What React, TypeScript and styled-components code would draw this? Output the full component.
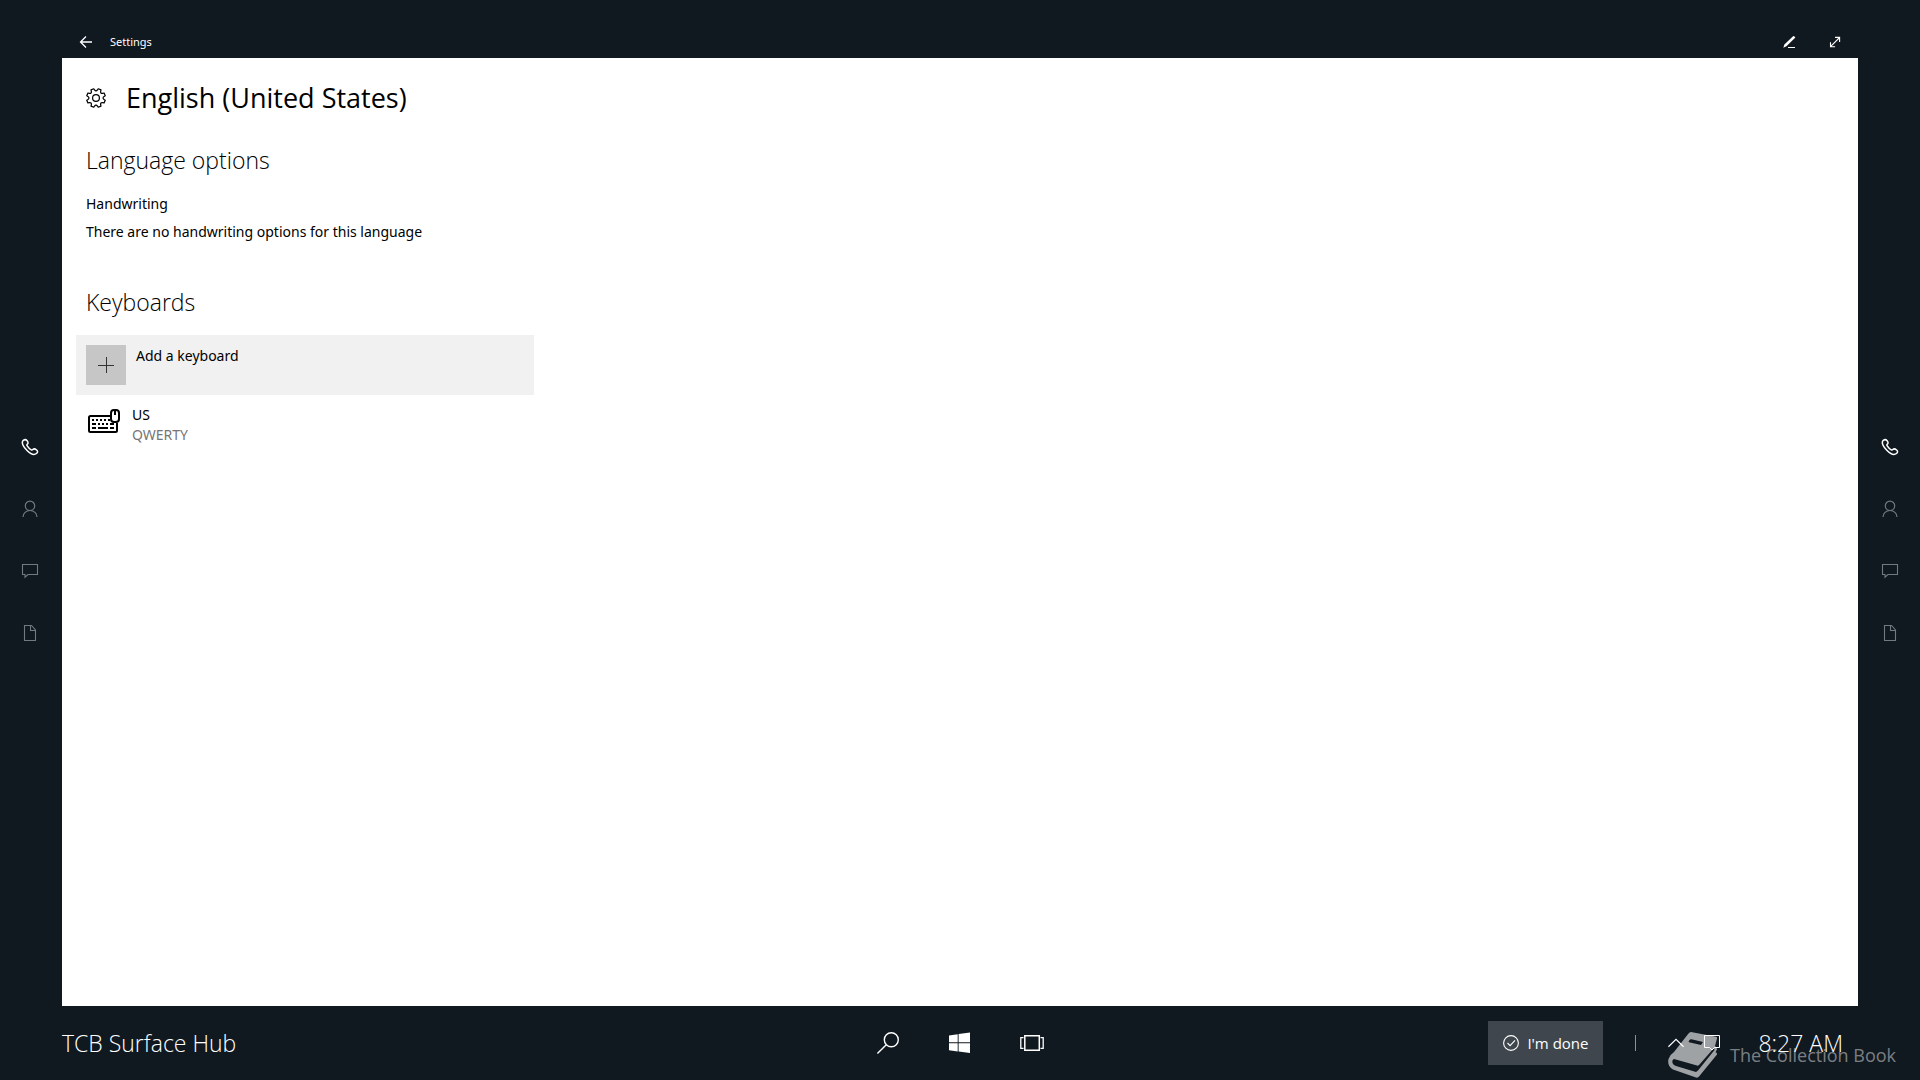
import React from "react";
import styled, { createGlobalStyle } from "styled-components";

const GlobalStyle = createGlobalStyle`
  *, *::before, *::after { box-sizing: border-box; }
  body {
    margin: 0;
    background: #101820;
    font-family: "Segoe UI", "Open Sans", "Noto Sans", sans-serif;
    color: #000;
  }
  button { font: inherit; color: inherit; border: 0; padding: 0; background: none; }
  h1, h2, h3, p, ul { margin: 0; padding: 0; }
  ul { list-style: none; }
  svg { display: block; flex: none; }
`;

const bodyFont = `"Segoe UI", "Noto Sans", "Open Sans", sans-serif`;

const Shell = styled.div`
  position: relative;
  min-height: 100vh;
  display: grid;
  grid-template-columns: 62px minmax(0, 1fr) 62px;
  grid-template-rows: 58px 1fr 74px;
  background: #101820;
  color: #fff;
`;

const TitleBar = styled.header`
  grid-column: 2;
  display: flex;
  align-items: center;
  justify-content: space-between;
  padding: 26px 15px 0 16px;
`;

const TitleGroup = styled.div`
  display: flex;
  align-items: center;
  gap: 16px;
  font-family: ${bodyFont};
  font-size: 11px;
  line-height: 16px;
`;

const WindowActions = styled.div`
  display: flex;
  gap: 30px;
`;

const IconButton = styled.button<{ $size: number; $dim?: boolean }>`
  display: grid;
  place-items: center;
  width: ${(p) => p.$size}px;
  height: ${(p) => p.$size}px;
  color: ${(p) => (p.$dim ? "#737980" : "#fff")};
`;

const Rail = styled.nav<{ $column: number }>`
  grid-column: ${(p) => p.$column};
  grid-row: 1 / -1;
  display: flex;
  flex-direction: column;
  align-items: center;
  justify-content: center;
  gap: 38px;
  padding: ${(p) => (p.$column === 1 ? "0 2px 0 0" : "0 0 0 2px")};
`;

const Panel = styled.main`
  grid-column: 2;
  grid-row: 2;
  background: #fff;
  color: #000;
  padding: 20px 24px;
`;

const PageHeading = styled.div`
  display: flex;
  align-items: center;
  gap: 18px;
`;

const PageTitle = styled.h1`
  font-size: 27px;
  line-height: 40px;
  font-weight: 400;
`;

const Section = styled.section`
  padding-top: 24px;
  & + & { padding-top: 38px; }
`;

const SectionTitle = styled.h2`
  font-size: 23px;
  line-height: 36px;
  font-weight: 300;
  margin-bottom: 12px;
`;

const Label = styled.h3`
  font-family: ${bodyFont};
  font-size: 14px;
  line-height: 28px;
  font-weight: 400;
`;

const Copy = styled.p`
  font-family: ${bodyFont};
  font-size: 14px;
  line-height: 28px;
`;

const KeyboardList = styled.ul`
  width: 458px;
  max-width: 100%;
  margin: 15px 0 0 -10px;
  font-family: ${bodyFont};
  font-size: 14px;
`;

const AddRow = styled.button`
  display: flex;
  gap: 10px;
  width: 100%;
  padding: 10px;
  background: #f1f1f1;
  line-height: 22px;
  text-align: left;
`;

const AddTile = styled.span`
  display: grid;
  place-items: center;
  width: 40px;
  height: 40px;
  background: #c6c6c6;
  color: #333;
`;

const KeyboardRow = styled.button`
  display: flex;
  gap: 12px;
  width: 100%;
  padding: 10px 12px;
  line-height: 20px;
  text-align: left;
`;

const KeyboardText = styled.span`
  display: flex;
  flex-direction: column;
`;

const Layout = styled.span`
  color: #767676;
`;

const TaskBar = styled.footer`
  grid-column: 2;
  grid-row: 3;
  display: grid;
  grid-template-columns: 1fr auto 1fr;
  align-items: center;
`;

const DeviceName = styled.span`
  font-size: 23px;
  line-height: 32px;
  font-weight: 300;
`;

const Launchers = styled.nav`
  display: flex;
  gap: 48px;
`;

const Tray = styled.div`
  display: flex;
  align-items: center;
  justify-content: flex-end;
  padding-right: 15px;
`;

const DoneButton = styled.button`
  display: flex;
  align-items: center;
  gap: 8px;
  height: 44px;
  padding: 0 15px;
  margin-right: 32px;
  background: #40464d;
  color: #fff;
  font-size: 15px;
  line-height: 20px;
`;

const Divider = styled.span`
  width: 1px;
  height: 16px;
  margin-right: 32px;
  background: #8b9096;
`;

const TrayIcons = styled.div`
  display: flex;
  gap: 20px;
  margin-right: 38px;
`;

const Clock = styled.time`
  font-size: 23px;
  line-height: 32px;
  font-weight: 300;
`;

const Watermark = styled.div`
  position: absolute;
  right: 24px;
  bottom: 2px;
  display: flex;
  align-items: center;
  gap: 12px;
  font-size: 18px;
  line-height: 24px;
  color: rgba(255, 255, 255, 0.46);
  pointer-events: none;

  svg { color: rgba(255, 255, 255, 0.6); }
`;

const stroke = { fill: "none", stroke: "currentColor" } as const;

const BackIcon = () => (
  <svg width="16" height="16" viewBox="0 0 16 16" {...stroke} strokeWidth="1.3">
    <path d="M14 8H2.7M8 2.5 2.5 8 8 13.5" />
  </svg>
);

const PenIcon = () => (
  <svg width="16" height="16" viewBox="0 0 16 16" fill="currentColor">
    <path d="M13.2 2.3 14.4 3.5 5.4 12.3 2.3 13.7 3.4 10.6 11.8 2.4Q12.5 1.8 13.2 2.3Z" />
    <path d="M7 13h7v1H7z" />
  </svg>
);

const ExpandIcon = () => (
  <svg width="16" height="16" viewBox="0 0 16 16" {...stroke} strokeWidth="1.1">
    <path d="M3.5 12.7 12.6 3.5M8 3.4h4.6V8M3.5 8.2v4.5h4.6" />
  </svg>
);

const gearPath = (() => {
  const teeth = 8;
  const at = (r: number, a: number) =>
    `${(10 + r * Math.cos(a)).toFixed(2)} ${(10 + r * Math.sin(a)).toFixed(2)}`;
  let d = "";
  for (let i = 0; i < teeth; i++) {
    const mid = -Math.PI / 2 + (Math.PI * 2 * (i + 0.5)) / teeth;
    d += `${i ? "L" : "M"}${at(8.2, mid - 0.21)}L${at(9.5, mid - 0.16)}L${at(9.5, mid + 0.16)}L${at(8.2, mid + 0.21)}`;
    d += `Q${at(6, mid + Math.PI / teeth)} ${at(8.2, mid + (Math.PI * 2) / teeth - 0.21)}`;
  }
  return `${d}Z`;
})();

const GearIcon = () => (
  <svg width="22" height="20" viewBox="0 0 22 20" {...stroke} strokeWidth="1.2" strokeLinejoin="round">
    <path d={gearPath} />
    <circle cx="10" cy="10" r="3.4" />
  </svg>
);

const PlusIcon = () => (
  <svg width="16" height="16" viewBox="0 0 16 16" {...stroke}>
    <path d="M0 8.5h16M8.5 0v16" />
  </svg>
);

const KeyboardIcon = () => (
  <svg width="32" height="32" viewBox="0 -4 32 32" {...stroke}>
    <path strokeWidth="2" d="M22 7H2.5Q1 7 1 8.5v13Q1 23 2.5 23h25Q29 23 29 21.500V14" />
    <rect strokeWidth="2" x="23" y="1" width="8" height="12" rx="3" />
    <path strokeWidth="2" d="M27 1v5" />
    <path strokeWidth="2" d="M4 11h2m2 0h2m2 0h2m2 0h2m2 0h2M4 15h4m2 0h2m2 0h2m2 0h2m2 0h4M4 19h4m2 0h10m2 0h4" />
  </svg>
);

const PhoneIcon = () => (
  <svg width="18" height="18" viewBox="0 0 18 18" {...stroke} strokeWidth="1.5" strokeLinejoin="round">
    <path d="M2.300 2.300Q4.500.8 6.100 2.800C7.200 4.200 7.400 5.400 6.300 6.200Q5.500 6.800 6.200 7.900Q7.900 10.600 10.300 11.900Q11.200 12.300 11.900 11.500C12.900 10.400 14.200 10.800 15.600 12Q17.600 13.800 15.500 15.500C13.300 17.300 9.900 16.300 6.300 12.800C2.300 8.900-.1 4.600 2.300 2.300Z" />
  </svg>
);

const PersonIcon = () => (
  <svg width="18" height="18" viewBox="0 0 18 18" {...stroke} strokeWidth="1.200">
    <circle cx="9" cy="5.800" r="4.700" />
    <path d="M2 17a7 6.500 0 0 1 14 0" />
  </svg>
);

const ChatIcon = () => (
  <svg width="18" height="18" viewBox="0 0 18 18" {...stroke} strokeWidth="1.100">
    <path d="M1.500 2.500h15v10H7L4 15.200v-2.700H1.500Z" />
  </svg>
);

const PageIcon = () => (
  <svg width="18" height="18" viewBox="0 0 18 18" {...stroke} strokeWidth="1.100">
    <path d="M3.500 1.500h7l4 4.500v10.500h-11ZM9.500 1.500v5h5" />
  </svg>
);

const SearchIcon = () => (
  <svg width="24" height="24" viewBox="0 0 24 24" {...stroke} strokeWidth="1.400">
    <circle cx="15.300" cy="8.700" r="7" />
    <path d="M10.300 13.700 1.400 22.500" />
  </svg>
);

const WindowsIcon = () => (
  <svg width="24" height="24" viewBox="0 0 24 24" fill="currentColor">
    <path d="M1 4.400 9.700 3.200V11.300H1ZM10.600 3 22 1.400v9.900H10.600ZM1 12.300H9.700V20.400L1 19.200ZM10.600 12.300H22v9.700L10.600 20.500Z" />
  </svg>
);

const TaskViewIcon = () => (
  <svg width="24" height="24" viewBox="0 0 24 24" {...stroke}>
    <path strokeWidth="1.500" d="M4.800 4.800h14.500v14.400H4.800Z" />
    <path strokeWidth="1.300" d="M3.500 6.700H.8v10.600h2.700M20.500 6.700h2.700v10.600h-2.700" />
  </svg>
);

const CheckIcon = () => (
  <svg width="16" height="16" viewBox="0 0 16 16" {...stroke} strokeWidth="1.1">
    <circle cx="8" cy="8" r="7.400" />
    <path d="m4.500 8 2.600 2.700L12 5.300" />
  </svg>
);

const ChevronIcon = () => (
  <svg width="16" height="16" viewBox="0 0 16 16" {...stroke} strokeWidth="1.200">
    <path d="M.4 11.700 8 4.300l7.600 7.400" />
  </svg>
);

const ActionIcon = () => (
  <svg width="16" height="16" viewBox="0 0 16 16" {...stroke}>
    <path d="M.5.5h15v12h-5L8 15l-2.500-2.500h-5Z" />
  </svg>
);

const BookIcon = () => (
  <svg width="50" height="46" viewBox="0 0 50 46" fill="currentColor" fillRule="evenodd">
    <path d="M23 0Q21.500 0 20.500 1.500L6 20Q2 22.500.5 27-1 34 5 37.500L28 45.500Q30 46 31 44.500L49 22.500Q49.500 21 47.500 20L49 17.500Q49 15.500 47 14L49 6.500Q49.500 5 48 4.700ZM22 7.500Q23 7 24.500 7.500L35 10 33 13 21 10.300Q20 9.500 22 7.500ZM6 27 29 33.500Q30.500 34 31.500 32.500L46 16 46.500 18 30 38.500 28 40 8 34Q3.500 32 4.500 28.500Q5 27 6 27Z" />
  </svg>
);

const railItems = [
  { label: "Call", Icon: PhoneIcon, dim: false },
  { label: "People", Icon: PersonIcon, dim: true },
  { label: "Chat", Icon: ChatIcon, dim: true },
  { label: "Files", Icon: PageIcon, dim: true },
];

const SideRail = ({ column }: { column: number }) => (
  <Rail $column={column} aria-label={column === 1 ? "Left shortcuts" : "Right shortcuts"}>
    {railItems.map(({ label, Icon, dim }) => (
      <IconButton key={label} $size={24} $dim={dim} aria-label={label}>
        <Icon />
      </IconButton>
    ))}
  </Rail>
);

export default function App() {
  return (
    <>
      <GlobalStyle />
      <Shell>
        <TitleBar>
          <TitleGroup>
            <IconButton $size={16} aria-label="Back"><BackIcon /></IconButton>
            <span>Settings</span>
          </TitleGroup>
          <WindowActions>
            <IconButton $size={16} aria-label="Annotate"><PenIcon /></IconButton>
            <IconButton $size={16} aria-label="Full screen"><ExpandIcon /></IconButton>
          </WindowActions>
        </TitleBar>

        <SideRail column={1} />

        <Panel>
          <PageHeading>
            <GearIcon />
            <PageTitle>English (United States)</PageTitle>
          </PageHeading>
          <Section>
            <SectionTitle>Language options</SectionTitle>
            <Label>Handwriting</Label>
            <Copy>There are no handwriting options for this language</Copy>
          </Section>
          <Section>
            <SectionTitle>Keyboards</SectionTitle>
            <KeyboardList>
              <li>
                <AddRow>
                  <AddTile><PlusIcon /></AddTile>
                  <span>Add a keyboard</span>
                </AddRow>
              </li>
              <li>
                <KeyboardRow>
                  <KeyboardIcon />
                  <KeyboardText>
                    <span>US</span>
                    <Layout>QWERTY</Layout>
                  </KeyboardText>
                </KeyboardRow>
              </li>
            </KeyboardList>
          </Section>
        </Panel>

        <SideRail column={3} />

        <TaskBar>
          <DeviceName>TCB Surface Hub</DeviceName>
          <Launchers aria-label="Taskbar">
            <IconButton $size={24} aria-label="Search"><SearchIcon /></IconButton>
            <IconButton $size={24} aria-label="Start"><WindowsIcon /></IconButton>
            <IconButton $size={24} aria-label="Task view"><TaskViewIcon /></IconButton>
          </Launchers>
          <Tray>
            <DoneButton><CheckIcon />I'm done</DoneButton>
            <Divider />
            <TrayIcons>
              <IconButton $size={16} aria-label="Show hidden icons"><ChevronIcon /></IconButton>
              <IconButton $size={16} aria-label="Notifications"><ActionIcon /></IconButton>
            </TrayIcons>
            <Clock>8:27 AM</Clock>
          </Tray>
        </TaskBar>

        <Watermark>
          <BookIcon />
          <span>The Collection Book</span>
        </Watermark>
      </Shell>
    </>
  );
}
